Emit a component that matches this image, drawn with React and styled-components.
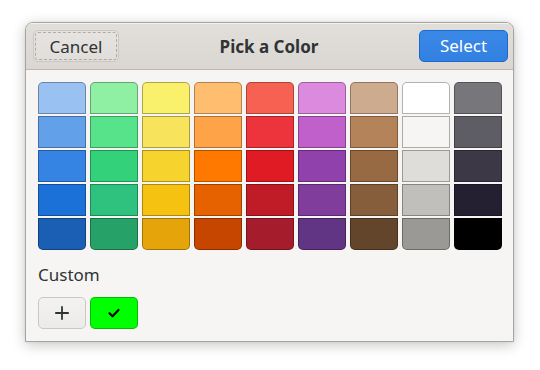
import React from 'react';
import styled, { createGlobalStyle } from 'styled-components';

const GlobalStyle = createGlobalStyle`
    body {
        margin : 0;
        background : #ffffff;
        font-family : "Noto Sans", "DejaVu Sans", sans-serif;
        color : #2e3436;
    }
`

// GNOME palette, column by column (light -> dark)
const palette = [
    ['#99c1f1', '#62a0ea', '#3584e4', '#1c71d8', '#1a5fb4'],
    ['#8ff0a4', '#57e389', '#33d17a', '#2ec27e', '#26a269'],
    ['#f9f06b', '#f8e45c', '#f6d32d', '#f5c211', '#e5a50a'],
    ['#ffbe6f', '#ffa348', '#ff7800', '#e66100', '#c64600'],
    ['#f66151', '#ed333b', '#e01b24', '#c01c28', '#a51d2d'],
    ['#dc8add', '#c061cb', '#9141ac', '#813d9c', '#613583'],
    ['#cdab8f', '#b5835a', '#986a44', '#865e3c', '#63452c'],
    ['#ffffff', '#f6f5f4', '#deddda', '#c0bfbc', '#9a9996'],
    ['#77767b', '#5e5c64', '#3d3846', '#241f31', '#000000'],
]

const App = () => {
    return (
        <Page>
            <GlobalStyle />
            <Dialog>
                <HeaderBar>
                    <CancelButton>Cancel</CancelButton>
                    <Title>Pick a Color</Title>
                    <SelectButton>Select</SelectButton>
                </HeaderBar>
                <Content>
                    <Palette>
                        {palette.map((col, c) => (
                            <Column key={c}>
                                {col.map((color, r) => (
                                    <Swatch key={color} $color={color} $pos={r === 0 ? 'top' : r === col.length - 1 ? 'bottom' : 'mid'} />
                                ))}
                            </Column>
                        ))}
                    </Palette>
                    <SectionLabel>Custom</SectionLabel>
                    <CustomRow>
                        <AddButton>
                            <svg width="16" height="16" viewBox="0 0 16 16">
                                <path d="M8 1.2v13.6M1.2 8h13.6" stroke="#2e3436" strokeWidth="1.8" fill="none" />
                            </svg>
                        </AddButton>
                        <CustomSwatch $color="#00ff00">
                            <svg width="14" height="14" viewBox="0 0 14 14">
                                <path d="M2.5 7.2l3 3 6-6.2" stroke="#000" strokeWidth="2.2" fill="none" strokeLinecap="round" strokeLinejoin="round" />
                            </svg>
                        </CustomSwatch>
                    </CustomRow>
                </Content>
            </Dialog>
        </Page>
    );
};

const Page = styled.div`
    width : 540px;
    height : 370px;
    padding : 22px 0 0 25px;
    box-sizing : border-box;
`
const Dialog = styled.div`
    width : 489px;
    height : 320px;
    box-sizing : border-box;
    border : 1px solid #a7a5a2;
    border-radius : 8px 8px 0 0;
    background : #f6f5f4;
    box-shadow : 0 3px 14px rgba(0,0,0,0.22), 0 0 3px rgba(0,0,0,0.08);
    display : flex;
    flex-direction : column;
    overflow : hidden;
`
const HeaderBar = styled.div`
    height : 47px;
    flex-shrink : 0;
    box-sizing : border-box;
    padding : 0 5px 0 7px;
    display : flex;
    align-items : center;
    justify-content : space-between;
    background : linear-gradient(#e2dfdb, #dad6d2);
    border-bottom : 1px solid #bfb8b1;
    box-shadow : inset 0 1px #f4f2f1;
`
const Title = styled.span`
    font-size : 17px;
    font-weight : bold;
    color : #2e3436;
`
const BaseButton = styled.button`
    height : 32px;
    box-sizing : border-box;
    border-radius : 5px;
    font-family : inherit;
    font-size : 17px;
    padding : 0;
`
const CancelButton = styled(BaseButton)`
    width : 86px;
    background : linear-gradient(#e6e3e0, #e0ddda);
    color : #2e3436;
    border : 1px solid #cdc7c2;
    outline : 1px dashed rgba(46,52,54,0.3);
    outline-offset : -3px;
`
const SelectButton = styled(BaseButton)`
    width : 89px;
    background : linear-gradient(#3a88e6, #3281e2);
    color : #ffffff;
    border : 1px solid #1b6acb;
    margin-top : -1px;
`
const Content = styled.div`
    flex : 1;
    padding : 12px 11px 12px 12px;
    display : flex;
    flex-direction : column;
`
const Palette = styled.div`
    display : flex;
    gap : 4px;
`
const Column = styled.div`
    display : flex;
    flex-direction : column;
    gap : 2px;
`
const Swatch = styled.div`
    width : 48px;
    height : 32px;
    box-sizing : border-box;
    background : ${p => p.$color};
    border : 1px solid rgba(0,0,0,0.3);
    border-radius : ${p => p.$pos === 'top' ? '5px 5px 0 0' : p.$pos === 'bottom' ? '0 0 5px 5px' : '0'};
`
const SectionLabel = styled.div`
    margin-top : 14px;
    font-size : 17px;
    line-height : 22px;
    color : #2e3436;
`
const CustomRow = styled.div`
    display : flex;
    gap : 4px;
    margin-top : 11px;
`
const AddButton = styled.div`
    width : 48px;
    height : 32px;
    box-sizing : border-box;
    border : 1px solid #cdc7c2;
    border-radius : 5px;
    background : linear-gradient(#f4f2f1, #edebe9);
    display : flex;
    align-items : center;
    justify-content : center;
`
const CustomSwatch = styled.div`
    width : 48px;
    height : 32px;
    box-sizing : border-box;
    border : 1px solid rgba(0,0,0,0.25);
    border-radius : 5px;
    background : ${p => p.$color};
    display : flex;
    align-items : center;
    justify-content : center;
`

export default App;
